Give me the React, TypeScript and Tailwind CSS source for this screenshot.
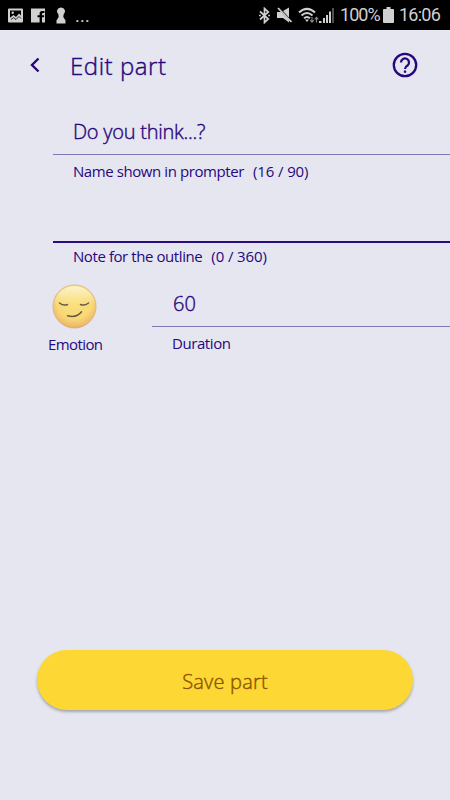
import type { ReactNode } from 'react';

interface FieldProps {
  children?: ReactNode;
  label: ReactNode;
  active?: boolean;
  className?: string;
}

function StatusBar() {
  return (
    <header className="h-[30px] bg-black text-[#d0d0d0] flex items-center justify-between pl-2 pr-[9px] font-['Roboto',sans-serif]">
      <div className="flex items-center h-full">
        {/* Picture */}
        <svg width="15" height="15" viewBox="0 0 15 15" fill="currentColor">
          <path fillRule="evenodd" d="M1 .5h13q1 0 1 1v12q0 1-1 1H1q-1 0-1-1v-12q0-1 1-1zM2 2.5v7.300l3.500-2.800 2.500 2L11 5.500l2 2V2.500z" />
          <path d="M3 11.500l2.500-1.800 2.500 1.800 3-3 2 2" stroke="#000" strokeWidth="0.800" fill="none" />
          <circle cx="4.7" cy="4.7" r="1.2" />
        </svg>
        {/* Facebook */}
        <svg className="ml-2" width="14" height="15" viewBox="0 0 14 15" fill="currentColor">
          <path d="M0 .5h14v14h-3V9.3h2l.3-2H11V6q0-1 1-1h1.500V3H11q-2.400 0-2.400 2.600v1.700H6.500v2h2.100v5.200H0z" />
        </svg>
        {/* Keyhole */}
        <svg className="ml-[11px]" width="10" height="17" viewBox="0 0 10 17" fill="currentColor">
          <path d="M5 .5a4 4 0 0 1 2.6 7.1L7.3 10l2.2 3.5V16.5H.5v-3L2.7 10l-.3-2.4A4 4 0 0 1 5 .5z" />
        </svg>
        <span className="ml-[9px] mt-0.5 text-[18px] leading-none tracking-[0.2px]">...</span>
      </div>

      <div className="flex items-center h-full">
        {/* Bluetooth */}
        <svg width="11" height="17" viewBox="0 0 11 17" fill="none" stroke="currentColor" strokeWidth="1.7">
          <path d="M1 4.500l8.300 7.500L5.500 15.500v-14L9.300 5 1 12.500" />
          <path d="M0 8.500h1.800M9.200 8.500H11" />
        </svg>
        {/* Muted speaker */}
        <svg className="ml-[7px]" width="16" height="16" viewBox="0 0 16 16" fill="currentColor">
          <path d="M0 5h4l8 8.500V15.500L6 11H0zM6 4L12 .5v10z" />
          <path d="M1 1l13.500 14" stroke="currentColor" strokeWidth="1.8" />
        </svg>
        {/* Wifi */}
        <svg className="ml-[5px]" width="21" height="17" viewBox="0 0 21 17" fill="none" stroke="currentColor" strokeWidth="2">
          <path d="M1 5.400q8-7 16 0M3.500 8.400q5.500-4.800 11 0M6 11.300q3-2.600 6 0" />
          <path d="M7 12.500L9 15l2-2.500z" fill="currentColor" stroke="none" />
          <g stroke="#888" strokeWidth="1.1">
            <path d="M14 10v5M12.200 13.200l1.800 2 1.800-2M18.500 15.500v-5M16.700 12.300l1.800-2 1.800 2" />
          </g>
        </svg>
        {/* Signal */}
        <svg width="16" height="15" viewBox="0 0 16 15" fill="currentColor">
          <path d="M0 13h2.500v2H0zM4 10h2v5H4zM7 7h2v8H7zM10 3.500h2V15h-2z" />
          <path d="M13 0h2v15h-2z" fill="#505050" />
        </svg>
        <span className="ml-[5px] w-10 text-[18px] leading-none tracking-[-0.95px] whitespace-nowrap">100%</span>
        <svg className="ml-[3px]" width="11" height="16" viewBox="0 0 11 16" fill="currentColor">
          <path d="M3.500 0h4v2H10q1 0 1 1v12q0 1-1 1H1q-1 0-1-1V3q0-1 1-1h2.500z" />
        </svg>
        <span className="ml-[5px] w-[42px] text-[18px] leading-none tracking-[-0.75px] whitespace-nowrap">16:06</span>
      </div>
    </header>
  );
}

function Field({ children, label, active, className = '' }: FieldProps) {
  return (
    <div className={className}>
      <div
        className={`flex items-center pl-5 ${
          active ? 'h-[53px] border-b-2 border-[#2d0a80]' : 'h-[46px] border-b border-[#7d77b5]'
        }`}
      >
        {children}
      </div>
      <div
        className={`pl-5 h-[33px] flex items-center text-[15px] tracking-[-0.42px] whitespace-pre ${
          active ? 'pb-1.5' : 'pb-px'
        }`}
      >
        {label}
      </div>
    </div>
  );
}

function Counter({ children }: { children: ReactNode }) {
  return <span className="ml-[9px] tracking-[-0.1px]">{children}</span>;
}

function EmotionFace() {
  return (
    <svg width="46" height="46" viewBox="0 0 46 46" fill="none">
      <defs>
        <radialGradient id="face" cx="0.5" cy="0.38" r="0.66">
          <stop offset="0" stopColor="#f8e27c" />
          <stop offset="0.62" stopColor="#f7d978" />
          <stop offset="0.87" stopColor="#f0ba68" />
          <stop offset="1" stopColor="#dd9156" />
        </radialGradient>
        <linearGradient id="shine" x1="0" y1="0" x2="0" y2="1">
          <stop offset="0" stopColor="#fffbe5" stopOpacity="0.75" />
          <stop offset="0.45" stopColor="#fffbe5" stopOpacity="0" />
        </linearGradient>
      </defs>
      <circle cx="22.5" cy="22.5" r="21.6" fill="url(#face)" stroke="#d6ad81" strokeWidth="0.7" />
      <circle cx="22.5" cy="22.5" r="20.5" fill="url(#shine)" />
      <g stroke="#6c5840" strokeWidth="1.5" strokeLinecap="round">
        <path d="M7.500 19q4 3.200 8 1.500M28.500 20.500q4 1.700 8-1.500" />
        <path d="M15.500 31.800q9 2.500 14-4" />
      </g>
    </svg>
  );
}

export default function App() {
  return (
    <div className="w-[450px] h-[800px] overflow-hidden flex flex-col bg-[#e5e6f0] text-[#28067d] font-['Open_Sans',sans-serif]">
      <StatusBar />

      <div className="h-[79px] shrink-0 flex items-center pb-2">
        <button className="ml-[29px] w-3 h-4 mb-0.5" aria-label="Back">
          <svg width="12" height="16" viewBox="0 0 12 16" fill="none" stroke="currentColor" strokeWidth="2.4">
            <path d="M9.500 1.500L3 8l6.500 6.500" />
          </svg>
        </button>
        <h1 className="ml-[29px] mt-px text-[24px] leading-8 whitespace-nowrap tracking-[0.55px] font-light [-webkit-text-stroke:0.4px]">
          Edit part
        </h1>
        <button className="ml-auto mr-8 mb-px" aria-label="Help">
          <svg width="26" height="26" viewBox="0 0 26 26" fill="none" stroke="currentColor" strokeWidth="2.3">
            <circle cx="13" cy="13" r="11.2" />
            <path d="M9 10.400a4 4 0 1 1 6.800 2.900Q13 15 13 17" />
            <path d="M13 18.500v2.300" />
          </svg>
        </button>
      </div>

      <main className="ml-[53px]">
        <Field
          label={
            <>
              <span>Name shown in prompter</span>
              <Counter>(16 / 90)</Counter>
            </>
          }
        >
          <span className="text-[20px] tracking-[-0.25px] font-light [-webkit-text-stroke:0.4px]">
            Do you think...?
          </span>
        </Field>

        <Field
          active
          className="mt-0.5"
          label={
            <>
              <span>Note for the outline</span>
              <Counter>(0 / 360)</Counter>
            </>
          }
        />

        <div className="flex">
          <div className="w-[99px] -ml-2 pt-2 shrink-0">
            <div className="ml-[7px]">
              <EmotionFace />
            </div>
            <div className="ml-[3px] mt-0.5 text-[15px] leading-6 tracking-[-0.6px]">Emotion</div>
          </div>
          <Field className="grow ml-2 mt-[5px]" label="Duration">
            <span className="ml-px text-[20px] font-light [-webkit-text-stroke:0.4px]">60</span>
          </Field>
        </div>
      </main>

      <button className="mt-auto mb-[90px] mx-[37px] h-[60px] pt-[3px] shrink-0 rounded-full bg-[#fdd835] text-[#8a5500] text-[20px] tracking-[0.2px] font-light [-webkit-text-stroke:0.4px] shadow-[0_2px_3px_rgba(0,0,0,0.28)]">
        Save part
      </button>
    </div>
  );
}
